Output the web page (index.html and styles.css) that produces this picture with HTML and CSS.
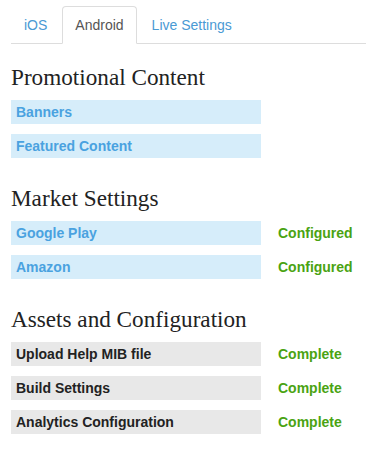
FILE: index.html
```html
<!DOCTYPE html>
<html>
<head>
<meta charset="utf-8">
<link rel="stylesheet" href="styles.css">
</head>
<body>
<div class="page">
  <ul class="tabs">
    <li class="tab"><a>iOS</a></li>
    <li class="tab active"><a>Android</a></li>
    <li class="tab"><a>Live Settings</a></li>
  </ul>

  <section class="section">
    <h2 class="heading">Promotional Content</h2>
    <div class="rows">
      <div class="item link">Banners</div><div class="status"></div>
      <div class="item link">Featured Content</div><div class="status"></div>
    </div>
  </section>

  <section class="section">
    <h2 class="heading">Market Settings</h2>
    <div class="rows">
      <div class="item link">Google Play</div><div class="status">Configured</div>
      <div class="item link">Amazon</div><div class="status">Configured</div>
    </div>
  </section>

  <section class="section">
    <h2 class="heading">Assets and Configuration</h2>
    <div class="rows">
      <div class="item plain">Upload Help MIB file</div><div class="status">Complete</div>
      <div class="item plain">Build Settings</div><div class="status">Complete</div>
      <div class="item plain">Analytics Configuration</div><div class="status">Complete</div>
    </div>
  </section>
</div>
</body>
</html>
```

FILE: styles.css
```css
html, body {
  margin: 0;
  padding: 0;
  background: #fff;
}

.page {
  padding: 6px 0 0 11px;
  font-family: "Liberation Sans", Arial, sans-serif;
}

.tabs {
  list-style: none;
  margin: 0;
  padding: 0;
  display: flex;
  border-bottom: 1px solid #dddddd;
}

.tab {
  margin-right: 2px;
  margin-bottom: -1px;
}

.tab a {
  display: block;
  padding: 8px 12px;
  font-size: 14px;
  line-height: 20px;
  color: #4a9ad4;
  border: 1px solid transparent;
  border-radius: 4px 4px 0 0;
}

.tab.active a {
  color: #555555;
  background: #fff;
  border-color: #dddddd;
  border-bottom-color: #fff;
}

.section {
  margin-top: 26px;
}

.tabs + .section {
  margin-top: 19px;
}

.heading {
  margin: 0 0 9px;
  font-family: "Liberation Serif", Georgia, serif;
  font-weight: normal;
  font-size: 23.2px;
  line-height: 28px;
  color: #222222;
}

.rows {
  display: grid;
  grid-template-columns: 250px auto;
  column-gap: 17px;
  row-gap: 10px;
  align-items: center;
}

.item {
  height: 24px;
  line-height: 24px;
  padding: 0 5px;
  box-sizing: border-box;
  font-size: 14px;
  font-weight: bold;
}

.item.link {
  background: #d6edfa;
  color: #4aa2e0;
}

.item.plain {
  background: #e8e8e8;
  color: #222222;
}

.status {
  font-size: 14px;
  font-weight: bold;
  color: #4aa312;
  line-height: 24px;
}
```
